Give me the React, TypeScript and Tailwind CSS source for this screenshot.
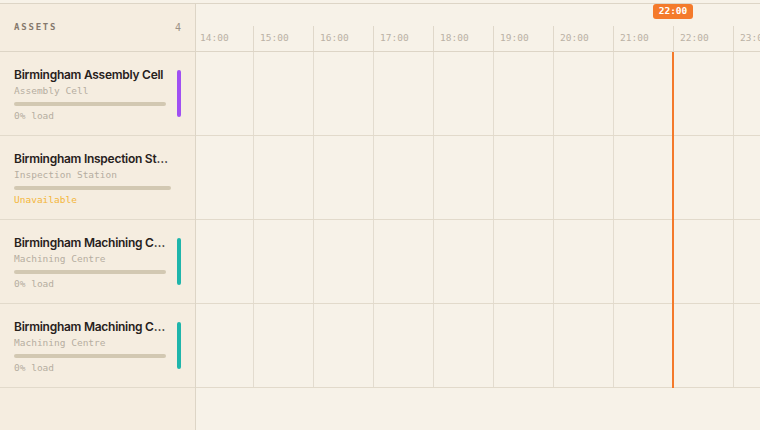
import React from "react";

const HOURS = ["14:00", "15:00", "16:00", "17:00", "18:00", "19:00", "20:00", "21:00", "22:00", "23:00"];

const ASSETS = [
  { name: "Birmingham Assembly Cell", type: "Assembly Cell", status: "0% load", stripe: "bg-[#a04ff2]", available: true },
  { name: "Birmingham Inspection Station", type: "Inspection Station", status: "Unavailable", stripe: "", available: false },
  { name: "Birmingham Machining Centre 01", type: "Machining Centre", status: "0% load", stripe: "bg-[#1fb5ab]", available: true },
  { name: "Birmingham Machining Centre 02", type: "Machining Centre", status: "0% load", stripe: "bg-[#1fb5ab]", available: true },
];

const mono = "font-['DejaVu_Sans_Mono','Liberation_Mono',monospace]";

export default function App() {
  return (
    <div className="w-[760px] h-[430px] overflow-hidden bg-[#f7f2e8] pt-[3px] font-['Inter','Noto_Sans',sans-serif]">
      <div className="flex h-full border-t border-[#ddd5c6]">
        {/* Sidebar */}
        <aside className="w-[196px] shrink-0 flex flex-col bg-[#f5ede0] border-r border-[#ddd5c6]">
          <div className="h-[48px] shrink-0 flex items-center justify-between px-[14px] border-b border-[#ddd5c6]">
            <span className={`${mono} text-[9px] font-bold tracking-[0.2em] text-[#85796d]`}>ASSETS</span>
            <span className={`${mono} text-[10px] text-[#9d9388]`}>4</span>
          </div>
          {ASSETS.map((a) => (
            <div
              key={a.name}
              className={`h-[84px] shrink-0 flex items-center gap-[11px] pl-[14px] border-b border-[#e2dacb] ${
                a.available ? "pr-[14px]" : "pr-[24px]"
              }`}
            >
              <div className="flex-1 min-w-0 pt-[4px]">
                <div className="truncate text-[12px] leading-[16px] font-semibold text-[#27211c] tracking-[-0.022em]">
                  {a.name}
                </div>
                <div className={`${mono} text-[9.5px] leading-[16px] text-[#b6ada1]`}>{a.type}</div>
                <div className="mt-[3px] h-[4px] rounded-full bg-[#d2c8b2]" />
                <div
                  className={`${mono} mt-[2px] text-[9.5px] leading-[16px] ${
                    a.available ? "text-[#b6ada1]" : "text-[#f4b63a]"
                  }`}
                >
                  {a.status}
                </div>
              </div>
              {a.available && <div className={`w-[4px] h-[47px] rounded-full shrink-0 ${a.stripe}`} />}
            </div>
          ))}
        </aside>

        {/* Timeline */}
        <div className="flex-1 min-w-0 relative overflow-hidden">
          <div className="h-[48px] border-b border-[#ddd5c6] relative">
            <div className="flex items-end h-full -ml-[3px]">
              {HOURS.map((h) => (
                <div
                  key={h}
                  className={`${mono} w-[60px] shrink-0 h-[25px] border-l border-[#e0d8ca] pl-[6px] flex items-center text-[9.5px] text-[#bab1a5]`}
                >
                  {h}
                </div>
              ))}
            </div>
            <div
              className={`${mono} absolute left-[457px] top-0 w-[40px] h-[15px] rounded-[3px] bg-[#f47a2b] text-white text-[9.5px] font-bold flex items-center justify-center`}
            >
              22:00
            </div>
          </div>

          <div className="relative">
            {ASSETS.map((a) => (
              <div key={a.name} className="h-[84px] flex -ml-[3px] border-b border-[#e2dacb]">
                {HOURS.map((h) => (
                  <div key={h} className="w-[60px] shrink-0 border-l border-[#e3dccf]" />
                ))}
              </div>
            ))}
            <div className="absolute left-[476px] top-0 bottom-0 w-[2px] bg-[#f47a2b]" />
          </div>
        </div>
      </div>
    </div>
  );
}
